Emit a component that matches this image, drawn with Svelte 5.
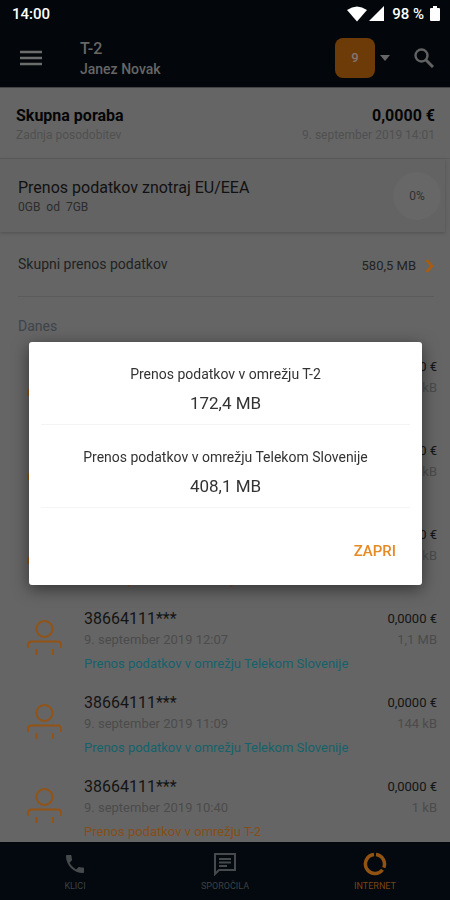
<script>
  let open = $state(true);

  const home = 'Prenos podatkov v omrežju T-2';
  const partner = 'Prenos podatkov v omrežju Telekom Slovenije';

  const totals = [
    { label: home, value: '172,4 MB' },
    { label: partner, value: '408,1 MB' }
  ];

  const sessions = [
    { time: '14:01', size: '12 kB', network: partner },
    { time: '13:22', size: '96 kB', network: partner },
    { time: '12:48', size: '48 kB', network: home },
    { time: '12:07', size: '1,1 MB', network: partner },
    { time: '11:09', size: '144 kB', network: partner },
    { time: '10:40', size: '1 kB', network: home }
  ];
</script>

<div class="app">
  <div class="status">
    <span>14:00</span>
    <div class="signals">
      <svg width="20" height="16" viewBox="0 0 20 16"><path d="M0 4Q10-3 20 4L10 15.500z" fill="#fff" /></svg>
      <svg width="15" height="16" viewBox="0 0 15 16"><path d="M15 0v15H0z" fill="#fff" /></svg>
      <span class="percent">98 %</span>
      <svg width="10" height="16" viewBox="0 0 10 16"><path d="M3 0h4v2h2q1 0 1 1v11q0 1-1 1H1q-1 0-1-1V3q0-1 1-1h2z" fill="#fff" /></svg>
    </div>
  </div>

  <header>
    <button class="menu" aria-label="Meni">
      <svg width="22" height="16" viewBox="0 0 22 16"><path d="M0 2h22M0 8h22M0 14h22" stroke="#6c6c6c" stroke-width="2.500" /></svg>
    </button>
    <div class="account">
      <h1>T-2</h1>
      <p>Janez Novak</p>
    </div>
    <button class="period">
      <span class="day">9</span>
      <svg width="10" height="6" viewBox="0 0 10 6"><path d="M0 0h10L5 6z" fill="#666" /></svg>
    </button>
    <button class="search" aria-label="Iskanje">
      <svg width="20" height="20" viewBox="0 0 20 20" fill="none" stroke="#626262"><circle cx="7.500" cy="7.500" r="6" stroke-width="2.400" /><path d="M12 12l7 7" stroke-width="3" /></svg>
    </button>
  </header>

  <main>
    <section class="summary">
      <div class="line strong"><span>Skupna poraba</span><span>0,0000 €</span></div>
      <div class="line faint"><span>Zadnja posodobitev</span><span>9. september 2019 14:01</span></div>
    </section>

    <section class="quota">
      <div>
        <h2>Prenos podatkov znotraj EU/EEA</h2>
        <p>0GB&nbsp; od&nbsp; 7GB</p>
      </div>
      <span class="ring">0%</span>
    </section>

    <button class="transfer">
      <span class="name">Skupni prenos podatkov</span>
      <span class="sum">580,5 MB</span>
      <svg width="9" height="14" viewBox="0 0 9 14"><path d="M1.500 1l5.500 6-5.500 6" fill="none" stroke="#a85c10" stroke-width="2.600" /></svg>
    </button>

    <h3>Danes</h3>
    <ul>
      {#each sessions as session}
        <li>
          <svg width="36" height="36" viewBox="0 0 36 36" fill="none" stroke="#935315" stroke-width="2">
            <circle cx="18.500" cy="9" r="8" />
            <path d="M2 28v-3q0-3.500 3.500-3.500h26q3.500 0 3.500 3.500v3M10.500 29v6M27 29v6" />
          </svg>
          <div class="details">
            <div class="line number"><span>38664111***</span><span class="price">0,0000 €</span></div>
            <div class="line date"><span>9. september 2019 {session.time}</span><span>{session.size}</span></div>
            <p class="network" class:home={session.network === home}>{session.network}</p>
          </div>
        </li>
      {/each}
    </ul>
  </main>

  <nav>
    <a href="#klici">
      <svg width="24" height="24" viewBox="0 0 24 24"><path fill="#474a4d" d="M6.620 10.790c1.440 2.830 3.760 5.140 6.590 6.590l2.200-2.200c.27-.27.67-.36 1.020-.24 1.120.37 2.330.57 3.570.57.55 0 1 .45 1 1V20c0 .55-.45 1-1 1-9.390 0-17-7.610-17-17 0-.55.45-1 1-1h3.500c.55 0 1 .45 1 1 0 1.250.2 2.450.57 3.570.11.35.03.74-.25 1.020l-2.200 2.200z" /></svg>
      KLICI
    </a>
    <a href="#sporocila">
      <svg width="24" height="24" viewBox="0 0 24 24" fill="none" stroke="#474a4d" stroke-width="2"><path d="M2 22V2h20v16H6zM6 7h12M6 10.500h12M6 14h8" /></svg>
      SPOROČILA
    </a>
    <a href="#internet" class="active">
      <svg width="24" height="24" viewBox="0 0 24 24" fill="none" stroke="#925212" stroke-width="3.500"><path d="M13 2.600A9.500 9.500 0 0 1 20.800 15.600M19.500 17.800A9.500 9.500 0 1 1 11 2.600" /></svg>
      INTERNET
    </a>
  </nav>
</div>

{#if open}
  <div class="overlay">
    <div class="dialog" role="dialog" aria-modal="true" aria-label="Skupni prenos podatkov">
      {#each totals as total}
        <div class="total">
          <p>{total.label}</p>
          <strong>{total.value}</strong>
        </div>
      {/each}
      <div class="actions">
        <button onclick={() => (open = false)}>ZAPRI</button>
      </div>
    </div>
  </div>
{/if}

<style>
  :global(body) {
    background: #656565;
  }
  .app,
  .overlay {
    font-family: Roboto, "Noto Sans", sans-serif;
  }
  .app {
    display: flex;
    flex-direction: column;
    height: 100vh;
    overflow: hidden;
    background: #656565;
    color: #111;
  }
  h1, h2, h3, p, ul {
    margin: 0;
    padding: 0;
    font-weight: 400;
  }
  svg {
    display: block;
    flex: none;
  }
  button {
    padding: 0;
    border: none;
    background: none;
    color: inherit;
    font-family: inherit;
    cursor: pointer;
  }
  .status {
    display: flex;
    align-items: center;
    justify-content: space-between;
    height: 28px;
    padding: 0 10px 0 12px;
    background: #03070b;
    color: #fff;
    font-size: 15px;
    font-weight: 500;
  }
  .signals {
    display: flex;
    align-items: center;
    gap: 2px;
  }
  .percent {
    margin: 0 4px 0 6px;
  }
  header {
    display: flex;
    align-items: center;
    height: 59px;
    padding: 0 16px 0 20px;
    border-bottom: 1px solid #444;
    background: #03070b;
    color: #666;
  }
  .account {
    flex: 1;
    margin-left: 38px;
    padding-top: 2px;
  }
  .account h1 {
    font-size: 16px;
    line-height: 20px;
    font-weight: 500;
  }
  .account p {
    font-size: 14px;
    line-height: 20px;
    font-weight: 500;
  }
  .period {
    display: flex;
    align-items: center;
    gap: 5px;
    margin-right: 24px;
  }
  .day {
    width: 40px;
    border-radius: 8px;
    background: #6d3b08;
    color: #817770;
    font-size: 13px;
    font-weight: 500;
    line-height: 40px;
  }
  main {
    flex: 1;
    min-height: 0;
    overflow: hidden;
  }
  .line {
    display: flex;
    justify-content: space-between;
  }
  .summary {
    padding: 18px 15px 14px 16px;
    border-bottom: 1px solid #5b5b5b;
  }
  .strong {
    color: #050505;
    font-size: 16px;
    font-weight: 700;
    line-height: 20px;
  }
  .faint {
    color: #505050;
    font-size: 12px;
    line-height: 18px;
  }
  .quota {
    display: flex;
    align-items: center;
    justify-content: space-between;
    height: 73px;
    margin-right: 5px;
    padding: 0 4px 0 18px;
    background: #636363;
    box-shadow: 0 1px 3px #505050;
  }
  .quota h2 {
    padding-top: 2px;
    font-size: 16px;
    line-height: 20px;
  }
  .quota p {
    color: #2c2c2c;
    font-size: 12px;
    line-height: 18px;
  }
  .ring {
    width: 48px;
    border-radius: 50%;
    background: #676767;
    color: #303030;
    font-size: 12px;
    line-height: 48px;
    text-align: center;
  }
  .transfer {
    display: flex;
    align-items: center;
    width: calc(100% - 34px);
    height: 65px;
    margin: 0 16px 0 18px;
    border-bottom: 1px solid #5b5b5b;
    font-size: 14px;
    line-height: 20px;
    text-align: left;
    color: #222;
  }
  .transfer .name {
    flex: 1;
  }
  .transfer .sum {
    padding-top: 4px;
    font-size: 13px;
  }
  .transfer svg {
    margin: 4px 0 0 9px;
  }
  h3 {
    padding: 19px 18px 15px;
    color: #3d444b;
    font-size: 14px;
    line-height: 20px;
  }
  ul {
    list-style: none;
  }
  li {
    display: flex;
    height: 84px;
    padding: 0 13px 0 26px;
    box-sizing: border-box;
  }
  li svg {
    margin-top: 17px;
  }
  .details {
    flex: 1;
    margin-left: 22px;
    padding-top: 5px;
  }
  .number {
    color: #141414;
    font-size: 16px;
    line-height: 21px;
  }
  .price {
    font-size: 13px;
  }
  .date {
    color: #4b4b4b;
    font-size: 13px;
    line-height: 21px;
  }
  .network {
    margin-top: 4px;
    color: #14626c;
    font-size: 13px;
    line-height: 20px;
  }
  .network.home {
    color: #874d16;
  }
  nav {
    display: flex;
    height: 58px;
    background: #03090e;
  }
  nav a {
    display: flex;
    flex: 1;
    flex-direction: column;
    align-items: center;
    gap: 4px;
    padding-top: 10px;
    color: #3e4144;
    font-size: 9px;
    line-height: 12px;
    text-decoration: none;
  }
  nav .active {
    color: #7a4410;
  }
  .overlay {
    position: fixed;
    inset: 0;
    display: flex;
    align-items: center;
    justify-content: center;
    padding: 26px 28px 0 29px;
  }
  .dialog {
    flex: 1;
    max-width: 560px;
    border-radius: 3px;
    background: #fff;
    box-shadow: 0 4px 16px rgba(0, 0, 0, 0.5);
    color: #333;
    text-align: center;
  }
  .total {
    margin: 0 12px;
    padding: 22px 0 9px;
    border-bottom: 1px solid #f4f4f4;
  }
  .total p {
    margin-bottom: 7px;
    font-size: 14px;
    line-height: 20px;
  }
  .total strong {
    display: block;
    font-size: 17px;
    font-weight: 400;
    line-height: 24px;
  }
  .actions {
    padding: 33px 26px 24px;
    text-align: right;
  }
  .actions button {
    color: #e58a25;
    font-size: 15px;
    font-weight: 500;
    line-height: 20px;
  }
</style>
